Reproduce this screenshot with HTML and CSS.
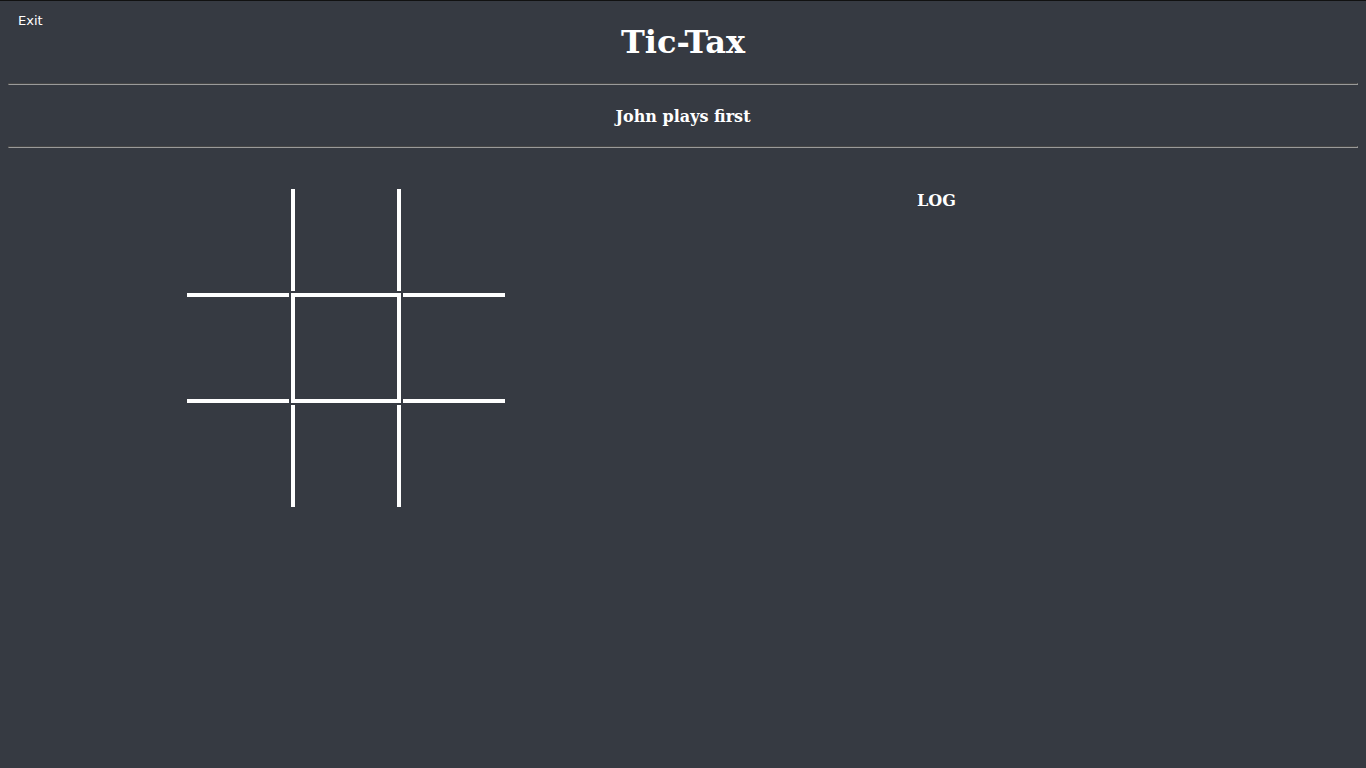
FILE: index.html
```html
<!DOCTYPE html>
<html>
<head>
<meta charset="utf-8">
<title>Tic-Tax</title>
<link rel="stylesheet" href="styles.css">
</head>
<body>
<a class="exit" href="#">Exit</a>
<h1 class="title">Tic-Tax</h1>
<hr>
<h3 class="status">John plays first</h3>
<hr>
<div class="main">
  <div class="board-col">
    <svg class="board" width="318" height="318" viewBox="0 0 318 318">
      <g fill="#ffffff">
        <rect x="104" y="0" width="4" height="102"/>
        <rect x="210" y="0" width="4" height="102"/>
        <rect x="104" y="216" width="4" height="102"/>
        <rect x="210" y="216" width="4" height="102"/>
        <rect x="0" y="104" width="102" height="4"/>
        <rect x="216" y="104" width="102" height="4"/>
        <rect x="0" y="210" width="102" height="4"/>
        <rect x="216" y="210" width="102" height="4"/>
      </g>
      <rect x="106" y="106" width="106" height="106" fill="none" stroke="#ffffff" stroke-width="4"/>
    </svg>
  </div>
  <div class="log-col">
    <h4 class="log-title">LOG</h4>
  </div>
</div>
</body>
</html>
```

FILE: styles.css
```css
html {
  background: #363a42;
  border-top: 1px solid #111;
  min-height: 100%;
  box-sizing: border-box;
}
body {
  margin: 8px;
  color: #ffffff;
  font-family: "DejaVu Serif", serif;
  position: relative;
}
.exit {
  position: absolute;
  left: 10px;
  top: 4px;
  font-family: "DejaVu Sans", sans-serif;
  font-size: 13px;
  color: #ffffff;
  text-decoration: none;
}
.title {
  text-align: center;
  font-size: 32px;
  margin: 14px 0 22px;
}
hr {
  border: 1px inset #9a9a9a;
  margin: 8px 0;
}
.status {
  text-align: center;
  font-size: 16px;
  margin: 22px 0 20px;
}
.main {
  display: grid;
  grid-template-columns: 1fr 1fr;
}
.board-col {
  display: flex;
  justify-content: center;
  padding-top: 33px;
}
.board {
  display: block;
}
.log-col {
  padding-left: 234px;
}
.log-title {
  font-size: 16px;
  margin: 35px 0 0;
}
```
